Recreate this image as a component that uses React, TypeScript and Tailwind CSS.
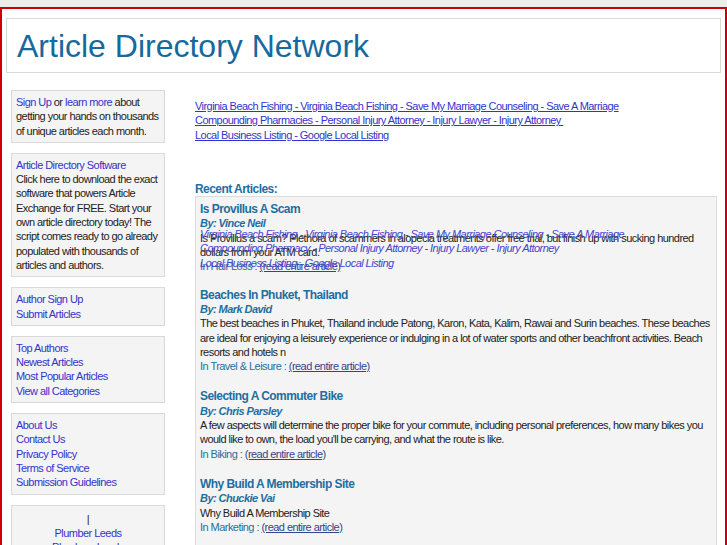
import React from 'react';

const SideBox: React.FC<{ children: React.ReactNode; center?: boolean }> = ({ children, center }) => (
  <div className={`border border-[#d9d9d9] bg-[#f4f4f4] px-[4px] py-[4px] mb-[10px] ${center ? 'text-center' : ''}`}>
    {children}
  </div>
);

const SLink: React.FC<{ children: React.ReactNode }> = ({ children }) => (
  <a href="#" className="text-[#3333cc]">{children}</a>
);

type Article = {
  title: string;
  author: string;
  body: string;
  category: string;
};

const articles: Article[] = [
  {
    title: 'Beaches In Phuket, Thailand',
    author: 'Mark David',
    body: 'The best beaches in Phuket, Thailand include Patong, Karon, Kata, Kalim, Rawai and Surin beaches. These beaches are ideal for enjoying a leisurely experience or indulging in a lot of water sports and other beachfront activities. Beach resorts and hotels n',
    category: 'Travel & Leisure',
  },
  {
    title: 'Selecting A Commuter Bike',
    author: 'Chris Parsley',
    body: "A few aspects will determine the proper bike for your commute, including personal preferences, how many bikes you would like to own, the load you'll be carrying, and what the route is like.",
    category: 'Biking',
  },
  {
    title: 'Why Build A Membership Site',
    author: 'Chuckie Vai',
    body: 'Why Build A Membership Site',
    category: 'Marketing',
  },
];

const ArticleItem: React.FC<{ a: Article }> = ({ a }) => (
  <div className="mb-[16px]">
    <div className="text-[12px] font-bold text-[#1f6ea0]">
      <a href="#">{a.title}</a>
    </div>
    <div className="font-bold italic text-[#1f6ea0]">By: {a.author}</div>
    <div className="text-[#222]">{a.body}</div>
    <div className="text-[#1f6ea0]">
      In {a.category} : <a href="#" className="underline text-[#334488]">(read entire article)</a>
    </div>
  </div>
);

export default function App() {
  return (
    <div className="min-h-[545px] bg-[#ececec] pt-[7px] font-['Liberation_Sans',Arial,sans-serif] text-[11px] leading-[14.3px] tracking-[-0.55px] text-[#222]">
      <div className="border-2 border-[#cc0000] bg-white pb-[20px]">
        {/* header */}
        <div className="mx-[4px] mt-[9px] border border-[#dadada] pl-[10px] pt-[9px] pb-[7px]">
          <h1 className="text-[32px] leading-[37px] tracking-normal text-[#17699d]">Article Directory Network</h1>
        </div>

        <div className="flex mt-[17px]">
          {/* sidebar */}
          <div className="w-[154px] ml-[9px] shrink-0">
            <SideBox>
              <SLink>Sign Up</SLink> or <SLink>learn more</SLink> about getting your hands on thousands of unique articles each month.
            </SideBox>
            <SideBox>
              <SLink>Article Directory Software</SLink>
              <br />
              Click here to download the exact software that powers Article Exchange for FREE. Start your own article directory today! The script comes ready to go already populated with thousands of articles and authors.
            </SideBox>
            <SideBox>
              <div className="flex flex-col items-start">
                <SLink>Author Sign Up</SLink>
                <SLink>Submit Articles</SLink>
              </div>
            </SideBox>
            <SideBox>
              <div className="flex flex-col items-start">
                <SLink>Top Authors</SLink>
                <SLink>Newest Articles</SLink>
                <SLink>Most Popular Articles</SLink>
                <SLink>View all Categories</SLink>
              </div>
            </SideBox>
            <SideBox>
              <div className="flex flex-col items-start">
                <SLink>About Us</SLink>
                <SLink>Contact Us</SLink>
                <SLink>Privacy Policy</SLink>
                <SLink>Terms of Service</SLink>
                <SLink>Submission Guidelines</SLink>
              </div>
            </SideBox>
            <SideBox center>
              <div className="pt-[2px]">|</div>
              <div className="flex flex-col items-center">
                <SLink>Plumber Leeds</SLink>
                <SLink>Plumbers Leeds</SLink>
              </div>
            </SideBox>
          </div>

          {/* main */}
          <div className="ml-[30px] w-[522px] pt-[9px]">
            <div className="flex flex-col items-start text-[#3333cc]">
              <a href="#" className="underline">Virginia Beach Fishing - Virginia Beach Fishing - Save My Marriage Counseling - Save A Marriage</a>
              <a href="#" className="underline">Compounding Pharmacies - Personal Injury Attorney - Injury Lawyer - Injury Attorney&nbsp;</a>
              <a href="#" className="underline">Local Business Listing - Google Local Listing</a>
            </div>

            <div className="mt-[40px] text-[12px] font-bold text-[#1f6ea0]">Recent Articles:</div>

            <div className="border border-[#dcdcdc] bg-[#f4f4f4] px-[4px] pt-[5px]">
              <div className="relative mb-[14px]">
                <div className="text-[12px] font-bold text-[#1f6ea0]">
                  <a href="#">Is Provillus A Scam</a>
                </div>
                <div className="font-bold italic text-[#1f6ea0]">By: Vince Neil</div>
                <div className="text-[#222]">
                  Is Provillus a scam? Plethora of scammers in alopecia treatments offer free trial, but finish up with sucking hundred dollars from your ATM card.
                </div>
                <div className="text-[#1f6ea0]">
                  In Hair Loss : <a href="#" className="underline text-[#334488]">(read entire article)</a>
                </div>
                <div className="absolute left-0 top-[25px] flex flex-col items-start italic text-[#4444cc]">
                  <span>Virginia Beach Fishing - Virginia Beach Fishing - Save My Marriage Counseling - Save A Marriage</span>
                  <span>Compounding Pharmacy - Personal Injury Attorney - Injury Lawyer - Injury Attorney</span>
                  <span>Local Business Listing - Google Local Listing</span>
                </div>
              </div>
              {articles.map((a) => (
                <ArticleItem key={a.title} a={a} />
              ))}
            </div>
          </div>
        </div>
      </div>
    </div>
  );
}
